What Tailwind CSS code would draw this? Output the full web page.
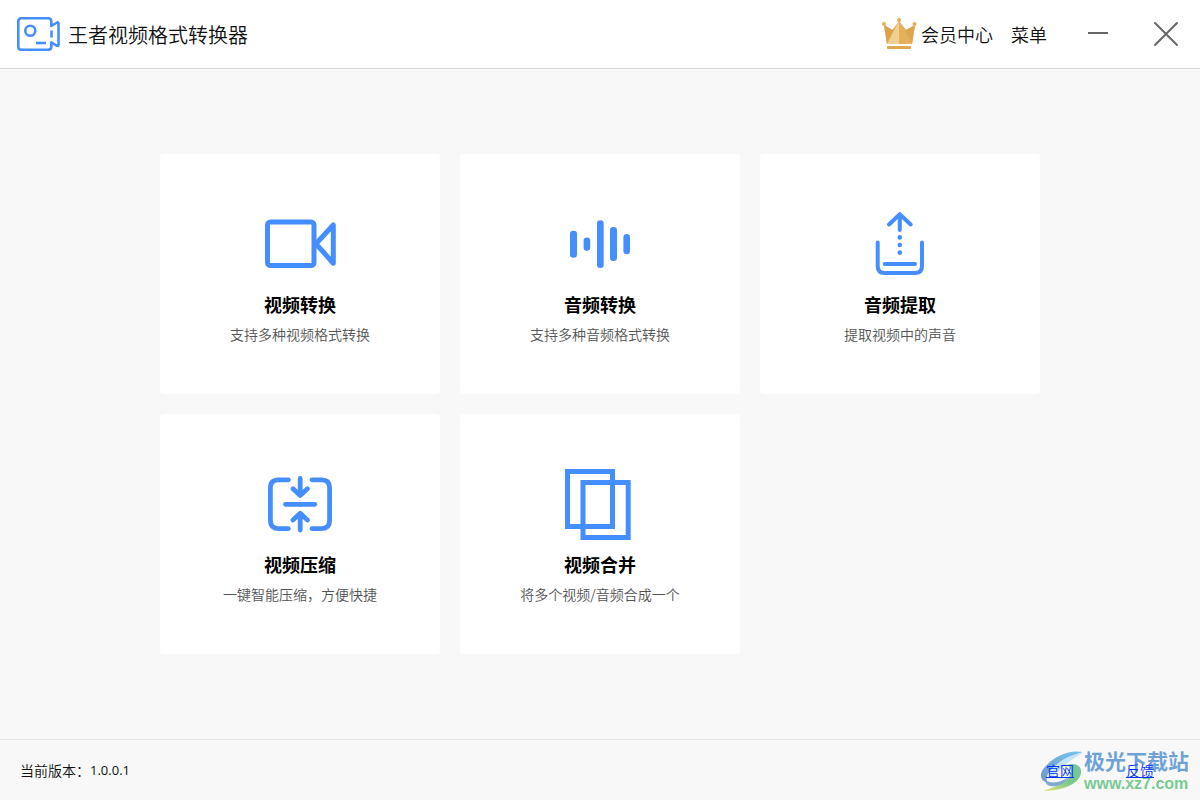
<!DOCTYPE html>
<html lang="zh-CN">
<head>
<meta charset="utf-8">
<meta name="viewport" content="width=device-width, initial-scale=1">
<title>王者视频格式转换器</title>
<script src="https://cdn.jsdelivr.net/npm/@tailwindcss/browser@4"></script>
</head>
<body class="flex min-h-screen flex-col bg-[#f8f8f8] font-['Noto_Sans_CJK_SC',sans-serif] font-[350] text-[#111]">
  <header class="flex h-[69px] items-center justify-between border-b border-[#d8d8d8] bg-white pl-4 pr-5">
    <div class="flex items-center gap-[7px]">
      <svg class="h-9 w-[45px]" viewBox="0 0 45 36" fill="none" stroke="#448eff" stroke-width="2.6" stroke-linecap="round" stroke-linejoin="round" aria-hidden="true">
        <path d="M35.300 9V5.300Q35.300 2.300 32.300 2.300H5.300Q2.300 2.300 2.300 5.300V30.700Q2.300 33.700 5.300 33.700H32.300Q35.300 33.700 35.300 30.700V27.500"/>
        <path d="M35.300 10L41 6.500Q42.500 6 42.500 7.500V28.800Q42.500 30.300 41 29.800L35.300 26.300"/>
        <path d="M35.500 14.500V21.500" stroke-linecap="butt"/>
        <circle cx="14.300" cy="14.800" r="5"/>
        <path d="M20 27H30" stroke-linecap="butt"/>
      </svg>
      <h1 class="pt-0.5 text-xl leading-7">王者视频格式转换器</h1>
    </div>
    <nav class="flex items-center text-lg leading-7">
      <button type="button" class="flex items-center gap-[3px]">
        <svg class="h-8 w-9" viewBox="0 0 36 32" aria-hidden="true">
          <path d="M2 7L10.500 12L17 3L24 12L33 7L30 26H5Z" fill="#dfa951"/>
          <path d="M2 7L10.500 12L12 10L5 26Z" fill="#dda34a"/>
          <path d="M17 3L5 26H17Z" fill="#efd091"/>
          <path d="M17 3L30 26H17Z" fill="#e4b05c"/>
          <path d="M33 7L24 12L30 26Z" fill="#dca54e"/>
          <circle cx="2" cy="6" r="2" fill="#e5ac56"/><circle cx="17" cy="2" r="2" fill="#e5ac56"/><circle cx="32.500" cy="6" r="2" fill="#e5ac56"/>
          <rect x="5" y="28" width="24" height="3" rx="1" fill="#e0a84f"/>
        </svg>
        <span>会员中心</span>
      </button>
      <button type="button" class="ml-[18px]">菜单</button>
      <button type="button" aria-label="最小化" class="ml-[37px] flex h-8 w-7 items-center justify-center">
        <svg class="h-6 w-6" viewBox="0 0 24 24" stroke="#666" stroke-width="2" aria-hidden="true"><path d="M2 11H22"/></svg>
      </button>
      <button type="button" aria-label="关闭" class="ml-10 flex h-8 w-7 items-center justify-center">
        <svg class="h-7 w-7" viewBox="0 0 28 28" stroke="#666" stroke-width="2" stroke-linecap="round" aria-hidden="true"><path d="M3 3L25 25M25 3L3 25"/></svg>
      </button>
    </nav>
  </header>

  <main class="flex grow flex-col items-center justify-center px-5">
    <div class="grid w-full max-w-[880px] grid-cols-3 gap-5">
      <button type="button" class="flex flex-col items-center rounded bg-white px-4 pt-[50px] pb-12">
        <svg class="h-20 w-20" viewBox="0 0 80 80" fill="none" stroke="#448eff" stroke-width="5" stroke-linejoin="round" aria-hidden="true">
          <rect x="7.500" y="18" width="46.500" height="43.500" rx="3"/>
          <path d="M56 39.800L73.300 21V59.300Z"/>
        </svg>
        <span class="mt-1.5 text-lg leading-7 font-bold text-black">视频转换</span>
        <span class="mt-1 text-sm leading-6 text-[#555]">支持多种视频格式转换</span>
      </button>

      <button type="button" class="flex flex-col items-center rounded bg-white px-4 pt-[50px] pb-12">
        <svg class="h-20 w-20" viewBox="0 0 80 80" fill="#448eff" aria-hidden="true">
          <rect x="10" y="26.700" width="7" height="27" rx="3.300"/>
          <rect x="23.600" y="33.400" width="6.600" height="13.500" rx="3.300"/>
          <rect x="37" y="16.300" width="6.700" height="47.700" rx="3.300"/>
          <rect x="50" y="23" width="7" height="34" rx="3.300"/>
          <rect x="63.400" y="30" width="6.600" height="20.300" rx="3.300"/>
        </svg>
        <span class="mt-1.5 text-lg leading-7 font-bold text-black">音频转换</span>
        <span class="mt-1 text-sm leading-6 text-[#555]">支持多种音频格式转换</span>
      </button>

      <button type="button" class="flex flex-col items-center rounded bg-white px-4 pt-[50px] pb-12">
        <svg class="h-20 w-20" viewBox="0 0 80 80" fill="none" stroke="#448eff" stroke-width="4" stroke-linecap="round" stroke-linejoin="round" aria-hidden="true">
          <path d="M29 20.500L39.800 10.200L50.700 20.500M39.800 10.200V26"/>
          <path d="M39.800 33.400V33.410M39.800 41V41.010M39.800 48.600V48.610" stroke-width="4.600"/>
          <path d="M17.700 38.500V62Q17.700 69 24.700 69H55Q62 69 62 62V38.500M24.800 60H55"/>
        </svg>
        <span class="mt-1.5 text-lg leading-7 font-bold text-black">音频提取</span>
        <span class="mt-1 text-sm leading-6 text-[#555]">提取视频中的声音</span>
      </button>

      <button type="button" class="flex flex-col items-center rounded bg-white px-4 pt-[50px] pb-12">
        <svg class="h-20 w-20" viewBox="0 0 80 80" fill="none" stroke="#448eff" stroke-width="4.800" stroke-linecap="round" stroke-linejoin="round" aria-hidden="true">
          <path d="M28.400 15.800H18.400Q10.400 15.800 10.400 23.800V56.600Q10.400 64.600 18.400 64.600H28.400M52 15.800H61.600Q69.600 15.800 69.600 23.800V56.600Q69.600 64.600 61.600 64.600H52"/>
          <path d="M25.500 40.300H54.700"/>
          <path d="M40.200 14.500V31M33 24.800L40.200 31.500L47.400 24.800M40.200 66V50M33 56L40.200 49.300L47.400 56"/>
        </svg>
        <span class="mt-1.5 text-lg leading-7 font-bold text-black">视频压缩</span>
        <span class="mt-1 text-sm leading-6 text-[#555]">一键智能压缩，方便快捷</span>
      </button>

      <button type="button" class="flex flex-col items-center rounded bg-white px-4 pt-[50px] pb-12">
        <svg class="h-20 w-20" viewBox="0 0 80 80" fill="none" stroke="#448eff" stroke-width="5" aria-hidden="true">
          <rect x="7.500" y="7.500" width="45" height="55"/>
          <rect x="23" y="18.500" width="45.200" height="55"/>
        </svg>
        <span class="mt-1.5 text-lg leading-7 font-bold text-black">视频合并</span>
        <span class="mt-1 text-sm leading-6 text-[#555]">将多个视频/音频合成一个</span>
      </button>
    </div>
  </main>

  <footer class="relative flex h-[61px] items-center justify-between border-t border-[#e4e4e4] pl-5 pr-[46px] text-sm">
    <p class="flex items-center">当前版本：<span class="font-['Open_Sans',sans-serif] text-[13px] font-normal">1.0.0.1</span></p>
    <div class="z-10 flex gap-[52px]">
      <a href="#website" class="text-[#0033ff] underline">官网</a>
      <a href="#feedback" class="text-[#0033ff] underline">反馈</a>
    </div>
    <!-- Download-site mark that shares the corner with the footer links -->
    <div class="pointer-events-none absolute right-[11px] bottom-1.5 flex items-center opacity-75">
      <svg class="h-11 w-11" viewBox="0 0 44 44" aria-hidden="true">
        <defs>
          <linearGradient id="sky" x1="0" y1="1" x2="1" y2="0"><stop offset="0" stop-color="#4577b8"/><stop offset="1" stop-color="#47b5ec"/></linearGradient>
          <linearGradient id="leaf" x1="0" y1="1" x2="1" y2="0"><stop offset="0" stop-color="#e6e04b"/><stop offset=".5" stop-color="#51b866"/><stop offset="1" stop-color="#49b985"/></linearGradient>
        </defs>
        <path d="M43 2C27 -1 12 8 4 18C-1 24 0 31 8 33C5 28 7 24 12 19C20 10 30 6 43 2Z" fill="url(#sky)"/>
        <path d="M14 18C22 8 32 5 42 3C33 9 28 12 23 17C18 22 13 25 10 29C9 25 11 21 14 18Z" fill="#b3ddf3"/>
        <path d="M27 15C36 12 42 16 41 23C39 35 20 41 3 41C15 37 27 32 30 25C32 20 31 17 27 15Z" fill="url(#leaf)"/>
        <path d="M6 31C14 34 22 32 28 27C24 35 17 37 10 36C7 35 5 33 6 31Z" fill="#578fc8"/>
      </svg>
      <div class="flex flex-col">
        <span class="text-[21px] leading-5 font-bold text-[#3f87cb]">极光下载站</span>
        <span class="pt-1 font-['Liberation_Sans',sans-serif] text-base leading-5 font-bold text-[#4cbd70]">www.xz7.com</span>
      </div>
    </div>
  </footer>
</body>
</html>
